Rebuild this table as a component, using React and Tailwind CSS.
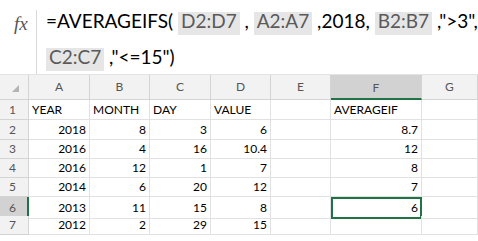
import React from 'react'

const cols = ['A', 'B', 'C', 'D', 'E', 'F', 'G']

const rows = [
  ['YEAR', 'MONTH', 'DAY', 'VALUE', '', 'AVERAGEIF', ''],
  ['2018', '8', '3', '6', '', '8.7', ''],
  ['2016', '4', '16', '10.4', '', '12', ''],
  ['2016', '12', '1', '7', '', '8', ''],
  ['2014', '6', '20', '12', '', '7', ''],
  ['2013', '11', '15', '8', '', '6', ''],
  ['2012', '2', '29', '15', '', '', ''],
]

const rowHeights = ['h-[20px]', 'h-[20px]', 'h-[19px]', 'h-[19px]', 'h-[19px]', 'h-[19px]', 'h-[19px]']

function Ref({ children }) {
  return (
    <span className="inline-block h-[23px] bg-[#e6e6e6] px-[3px] pt-[2px] leading-[14px] text-[#5a5a5a]">
      {children}
    </span>
  )
}

function FormulaBar() {
  return (
    <div className="flex h-[74px] bg-white">
      <div className="w-[36px] pl-[14px] pt-[10px]">
        <span className="text-[19px] italic text-[#555]" style={{ fontFamily: '"Liberation Serif", serif' }}>
          fx
        </span>
      </div>
      <div className="mt-[10px] border-l border-[#d9d9d9]" />
      <div className="whitespace-nowrap pl-[9px] pt-[3px] text-[19px] leading-[36px] text-black">
        =AVERAGEIFS( <Ref>D2:D7</Ref> , <Ref>A2:A7</Ref> ,2018, <Ref>B2:B7</Ref> ,"&gt;3",
        <br />
        <Ref>C2:C7</Ref> ,"&lt;=15")
      </div>
    </div>
  )
}

function HeaderRow() {
  return (
    <div className="grid h-[26px] grid-cols-[29px_61px_60px_61px_60px_60px_91px_1fr] border-t border-[#e3e3e3] bg-[#f2f2f2] text-[12px] text-[#555]">
      <div className="flex items-end justify-end border-r border-b border-[#d4d4d4] pr-[9px] pb-[7px]">
        <div className="h-0 w-0 border-b-[7px] border-l-[7px] border-b-[#b4b4b4] border-l-transparent" />
      </div>
      {cols.map((c) => (
        <div
          key={c}
          className={
            c === 'F'
              ? 'flex items-center justify-center border-r border-b-2 border-r-[#d4d4d4] border-b-[#217346] bg-[#d2d2d2] pt-[2px]'
              : 'flex items-center justify-center border-r border-b border-[#d4d4d4]'
          }
        >
          {c}
        </div>
      ))}
    </div>
  )
}

function DataRow({ cells, index }) {
  const n = index + 1
  const selectedRow = n === 6
  return (
    <div className={`grid grid-cols-[29px_61px_60px_61px_60px_60px_91px_1fr] text-[12px] text-black ${rowHeights[index]}`}>
      <div
        className={
          selectedRow
            ? 'flex items-center border-b border-r-2 border-b-[#d4d4d4] border-r-[#217346] bg-[#d2d2d2] pl-[9px] text-[#555]'
            : 'flex items-center border-r border-b border-[#d4d4d4] bg-[#f2f2f2] pl-[9px] text-[#555]'
        }
      >
        {n}
      </div>
      {cells.map((v, i) => {
        const isNum = v !== '' && !isNaN(Number(v))
        const selected = selectedRow && i === 5
        return (
          <div
            key={i}
            className={
              selected
                ? 'flex items-center justify-end border-2 border-[#217346] pr-[2px]'
                : `flex items-center border-r border-b border-[#e1e1e1] px-[3px] ${isNum ? 'justify-end' : 'justify-start'}`
            }
          >
            {v}
          </div>
        )
      })}
    </div>
  )
}

export default function App() {
  return (
    <div className="h-[241px] w-[478px] overflow-hidden bg-white" style={{ fontFamily: 'Lato, "Liberation Sans", sans-serif' }}>
      <FormulaBar />
      <HeaderRow />
      {rows.map((r, i) => (
        <DataRow key={i} cells={r} index={i} />
      ))}
    </div>
  )
}
